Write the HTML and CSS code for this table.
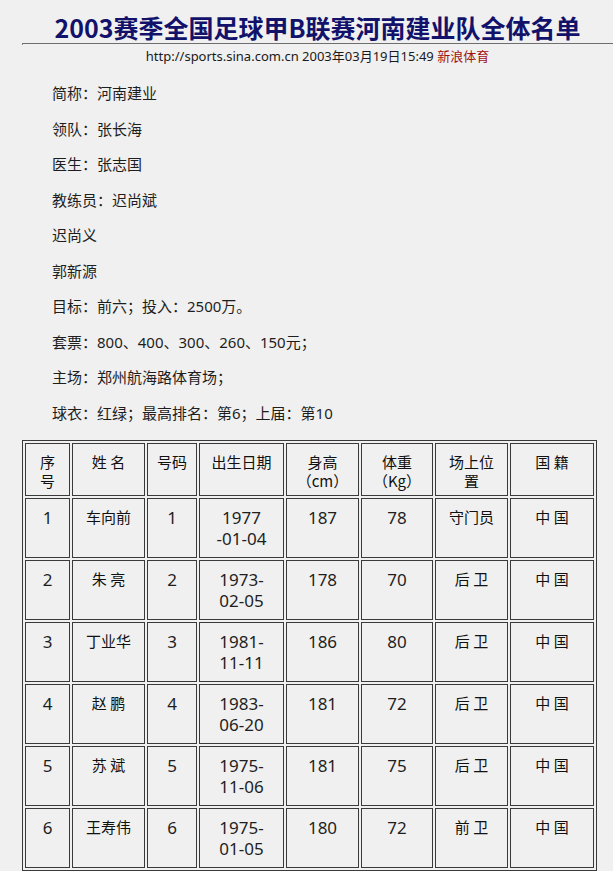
FILE: index.html
```html
<!DOCTYPE html>
<html lang="zh-CN">
<head>
<meta charset="utf-8">
<title>2003赛季全国足球甲B联赛河南建业队全体名单</title>
<link rel="stylesheet" href="styles.css">
</head>
<body>
<div class="page">
  <h1 class="title">2003赛季全国足球甲B联赛河南建业队全体名单</h1>
  <div class="rule"></div>
  <div class="meta">http://sports.sina.com.cn 2003年03月19日15:49 <span class="src">新浪体育</span></div>
  <div class="info">
    <p>简称：河南建业</p>
    <p>领队：张长海</p>
    <p>医生：张志国</p>
    <p>教练员：迟尚斌</p>
    <p>迟尚义</p>
    <p>郭新源</p>
    <p>目标：前六；投入：2500万。</p>
    <p>套票：800、400、300、260、150元；</p>
    <p>主场：郑州航海路体育场；</p>
    <p>球衣：红绿；最高排名：第6；上届：第10</p>
  </div>
  <table class="roster">
    <colgroup>
      <col class="c1"><col class="c2"><col class="c3"><col class="c4"><col class="c5"><col class="c6"><col class="c7"><col class="c8">
    </colgroup>
    <tr class="head">
      <td>序<br>号</td><td>姓 名</td><td>号码</td><td>出生日期</td><td>身高<br>（cm）</td><td>体重<br>（Kg）</td><td>场上位<br>置</td><td>国 籍</td>
    </tr>
    <tr class="row">
      <td>1</td><td class="name">车向前</td><td>1</td><td>1977<br>-01-04</td><td>187</td><td>78</td><td class="name">守门员</td><td class="name">中 国</td>
    </tr>
    <tr class="row">
      <td>2</td><td class="name">朱 亮</td><td>2</td><td>1973-<br>02-05</td><td>178</td><td>70</td><td class="name">后 卫</td><td class="name">中 国</td>
    </tr>
    <tr class="row">
      <td>3</td><td class="name">丁业华</td><td>3</td><td>1981-<br>11-11</td><td>186</td><td>80</td><td class="name">后 卫</td><td class="name">中 国</td>
    </tr>
    <tr class="row">
      <td>4</td><td class="name">赵 鹏</td><td>4</td><td>1983-<br>06-20</td><td>181</td><td>72</td><td class="name">后 卫</td><td class="name">中 国</td>
    </tr>
    <tr class="row">
      <td>5</td><td class="name">苏 斌</td><td>5</td><td>1975-<br>11-06</td><td>181</td><td>75</td><td class="name">后 卫</td><td class="name">中 国</td>
    </tr>
    <tr class="row">
      <td>6</td><td class="name">王寿伟</td><td>6</td><td>1975-<br>01-05</td><td>180</td><td>72</td><td class="name">前 卫</td><td class="name">中 国</td>
    </tr>
  </table>
</div>
</body>
</html>
```

FILE: styles.css
```css
html, body {
  margin: 0;
  padding: 0;
  background: #f0f0f0;
}

body {
  font-family: "Noto Sans", "Noto Sans CJK SC", sans-serif;
  color: #1a1a1a;
}

.page {
  padding-left: 22px;
}

.title {
  margin: 0;
  padding-top: 12px;
  font-size: 25px;
  line-height: 30px;
  font-weight: 700;
  color: #12126a;
  text-align: center;
  font-family: "Noto Sans CJK SC", sans-serif;
  white-space: nowrap;
}

.rule {
  margin-top: 1px;
  height: 2px;
  border-top: 1px solid #6e6e6e;
  border-left: 1px solid #8a8a8a;
  box-sizing: border-box;
}

.meta {
  margin-top: 2px;
  font-size: 13px;
  line-height: 18px;
  text-align: center;
  color: #1a1a1a;
  white-space: nowrap;
}

.src {
  color: #a01010;
}

.info {
  padding-left: 30px;
  padding-top: 3px;
}

.info p {
  margin: 15px 0;
  font-size: 15px;
  line-height: 20.5px;
  color: #1e1e1e;
}

.info p:last-child {
  margin-bottom: 17px;
}

.roster {
  table-layout: fixed;
  width: 575px;
  border-collapse: separate;
  border-spacing: 2px;
  border: 1px solid #3a3a3a;
  margin: 0;
}

.c1 { width: 45px; }
.c2 { width: 73px; }
.c3 { width: 50px; }
.c4 { width: 85px; }
.c5 { width: 73px; }
.c6 { width: 72px; }
.c7 { width: 73px; }
.c8 { width: 84px; }

.roster td {
  box-sizing: border-box;
  border: 1px solid #3a3a3a;
  padding: 8px 1px 0;
  vertical-align: top;
  text-align: center;
  font-size: 17px;
  line-height: 21px;
  color: #1e1e1e;
}

.roster .head {
  height: 53px;
}

.roster .head td {
  font-size: 15px;
  line-height: 19px;
  color: #111;
  font-family: "Noto Sans CJK SC", sans-serif;
}

.roster .row {
  height: 60px;
}

.roster td.name {
  font-family: "Noto Sans CJK SC", sans-serif;
  font-weight: 400;
  font-size: 15px;
  line-height: 19px;
  color: #111;
}
```
